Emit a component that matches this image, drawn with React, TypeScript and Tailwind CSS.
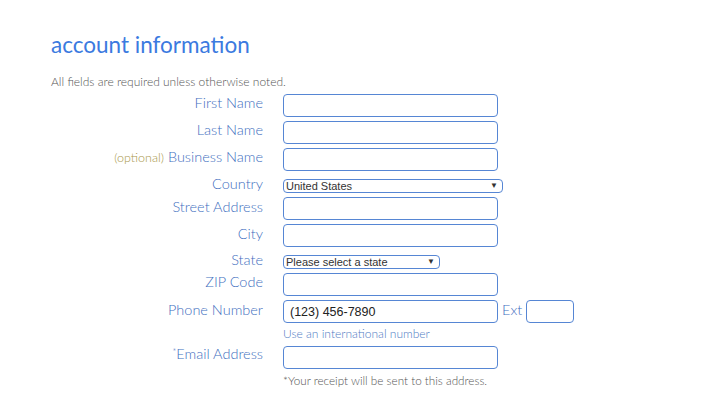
/**
 * 账户信息表单
 * 标题、说明文字与按行排列的字段
 */

const boxBase =
  "h-[23px] w-[215px] rounded-[4px] border border-[#5686d4] bg-white px-[6px] text-[#222] outline-none";
const inputBox = `${boxBase} text-[14px]`;

/** 单行：右对齐标签 + 输入控件 */
function Row({
  label,
  labelTop = 0,
  children,
  className = "",
}: {
  label: React.ReactNode;
  labelTop?: number;
  children: React.ReactNode;
  className?: string;
}) {
  return (
    <div className={`flex items-start gap-[20px] ${className}`}>
      <div
        className="w-[212px] shrink-0 text-right text-[14.5px] leading-[18px] font-light text-[#3f6fc0]"
        style={{ marginTop: labelTop }}
      >
        {label}
      </div>
      {children}
    </div>
  );
}

/** 模拟下拉框 */
function FakeSelect({ value, width }: { value: string; width: string }) {
  return (
    <div
      className={`mt-[4px] flex h-[14px] ${width} items-center justify-between rounded-[4px] border border-[#5686d4] bg-white pl-[2px] pr-[4px] font-['Liberation_Sans',Arial,sans-serif] text-[11px] leading-none text-[#333]`}
    >
      <span>{value}</span>
      <span className="text-[8px] text-[#333]">▼</span>
    </div>
  );
}

export default function App() {
  return (
    <div className="min-h-[405px] w-[712px] bg-white pl-[51px] font-['Lato',sans-serif]">
      {/* 标题区 */}
      <h1 className="pt-[31px] text-[22.5px] leading-[28px] font-normal text-[#3b7ae0]">
        account information
      </h1>
      <p className="mt-[15px] text-[12px] leading-[16px] font-light text-[#555]">
        All fields are required unless otherwise noted.
      </p>

      {/* 表单字段 */}
      <div className="mt-[4px]">
        <Row label="First Name">
          <input className={inputBox} />
        </Row>
        <Row label="Last Name" className="mt-[4px]">
          <input className={inputBox} />
        </Row>
        <Row
          label={
            <>
              <span className="text-[12.5px] text-[#a8974a]">(optional)</span> Business Name
            </>
          }
          className="mt-[4px]"
        >
          <input className={inputBox} />
        </Row>
        <Row label="Country" className="mt-[4px]">
          <FakeSelect value="United States" width="w-[220px]" />
        </Row>
        <Row label="Street Address" labelTop={1} className="mt-[4px]">
          <input className={inputBox} />
        </Row>
        <Row label="City" labelTop={1} className="mt-[4px]">
          <input className={inputBox} />
        </Row>
        <Row label="State" className="mt-[4px]">
          <FakeSelect value="Please select a state" width="w-[157px]" />
        </Row>
        <Row label="ZIP Code" className="mt-[4px]">
          <input className={inputBox} />
        </Row>
        <Row label="Phone Number" labelTop={1} className="mt-[4px]">
          <div>
            <div className="flex items-start">
              <input
                className={`${boxBase} font-['Liberation_Sans',Arial,sans-serif] text-[12.5px]`}
                defaultValue="(123) 456-7890"
              />
              <span className="ml-[4px] mt-[1px] text-[14.5px] leading-[18px] font-light text-[#3f6fc0]">Ext</span>
              <input className="ml-[4px] h-[23px] w-[48px] rounded-[4px] border border-[#5686d4] bg-white outline-none" />
            </div>
            <p className="mt-[3px] text-[12px] leading-[16px] font-light text-[#4f7cc4]">
              Use an international number
            </p>
          </div>
        </Row>
        <Row
          label={
            <>
              <span className="relative -top-[4px] text-[9px]">*</span>Email Address
            </>
          }
          className="mt-[3px]"
        >
          <div>
            <input className={inputBox} />
            <p className="mt-[3px] text-[11.7px] leading-[16px] font-light text-[#555]">
              *Your receipt will be sent to this address.
            </p>
          </div>
        </Row>
      </div>
    </div>
  );
}
